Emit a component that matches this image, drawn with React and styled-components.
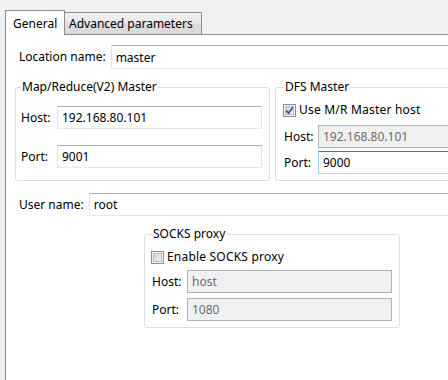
import React from "react";
import styled, { createGlobalStyle, css } from "styled-components";

const Global = createGlobalStyle`
  html, body { margin: 0; padding: 0; overflow: hidden; }
  body { font-family: "Noto Sans", "Open Sans", sans-serif; font-size: 12px; color: #000; }
`;

const Root = styled.div`
  width: 448px;
  height: 380px;
  box-sizing: border-box;
  background: #f0f0f0;
  padding: 10px 0 0 5px;
  display: flex;
  flex-direction: column;
  overflow: hidden;
`;

const TabStrip = styled.div`
  display: flex;
  align-items: flex-end;
  height: 24px;
`;

const Tab = styled.div`
  box-sizing: border-box;
  border: 1px solid #898c95;
  border-bottom: none;
  display: flex;
  align-items: center;
  white-space: nowrap;
  ${(p) =>
    p.$active
      ? css`
          width: 60px;
          height: 25px;
          margin-bottom: -1px;
          background: #fff;
          padding-left: 7px;
          position: relative;
          z-index: 1;
        `
      : css`
          width: 137px;
          height: 22px;
          border-left: none;
          background: linear-gradient(#f2f2f2, #e6e6e6 50%, #d9d9d9 51%, #dcdcdc);
          padding-left: 4px;
        `}
`;

const Panel = styled.div`
  flex: 1;
  width: 470px;
  box-sizing: border-box;
  background: #fff;
  border-left: 1px solid #898c95;
  border-top: 1px solid #898c95;
  padding: 10px 0 0 9px;
  display: flex;
  flex-direction: column;
`;

const FormRow = styled.div`
  display: flex;
  align-items: center;
  gap: ${(p) => p.$gap || 5}px;
  padding-left: 4px;
  margin-top: ${(p) => p.$mt || 0}px;
`;

const Label = styled.span`
  white-space: nowrap;
  line-height: 16px;
`;

const Field = styled.input`
  box-sizing: border-box;
  height: ${(p) => p.$h || 23}px;
  flex: 1;
  min-width: 0;
  margin: 0;
  padding: 0 0 0 4px;
  font: inherit;
  font-size: 12px;
  color: #000;
  background: #fff;
  border: 1px solid;
  border-color: #abadb3 #e2e3ea #e3e9ef #e2e3ea;
  outline: none;
  ${(p) =>
    p.$hover &&
    css`
      border-color: #3d7bad #a4c9e3 #b7d9ed #a4c9e3;
    `}
  &:disabled {
    background: #f0f0f0;
    border-color: #adb2b5;
    color: #6d6d6d;
  }
`;

const GroupsRow = styled.div`
  display: flex;
  gap: 5px;
  margin-top: 10px;
  align-items: stretch;
`;

const Group = styled.fieldset`
  box-sizing: border-box;
  margin: 0;
  min-width: 0;
  border: 1px solid #d5dfe5;
  border-radius: 3px;
  padding: ${(p) => p.$pad};
  width: ${(p) => (p.$width ? `${p.$width}px` : "auto")};
  flex: ${(p) => (p.$width ? "none" : 1)};
  margin-left: ${(p) => p.$ml || 0}px;
  margin-top: ${(p) => p.$mt || 0}px;
  display: flex;
  flex-direction: column;
`;

const Legend = styled.legend`
  padding: 0 1px;
  line-height: 16px;
  white-space: nowrap;
`;

const Grid = styled.div`
  display: grid;
  grid-template-columns: ${(p) => p.$labelWidth}px 1fr;
  column-gap: 4px;
  row-gap: ${(p) => p.$rowGap}px;
  align-items: center;
  margin-top: ${(p) => p.$mt || 0}px;
`;

const CheckRow = styled.label`
  display: flex;
  align-items: center;
  gap: 3px;
  height: 17px;
  line-height: 16px;
  margin-left: -1px;
  white-space: nowrap;
  letter-spacing: 0.2px;
`;

const Box = styled.span`
  box-sizing: border-box;
  width: 13px;
  height: 13px;
  border: 1px solid #8e8f8f;
  background: #f4f4f4;
  padding: 1px;
  display: flex;
  flex: none;
  margin-top: 1px;
`;

const BoxInner = styled.span`
  flex: 1;
  border: 1px solid #b8bcc2;
  background: linear-gradient(135deg, #cbcfd5, #f6f6f6);
  display: flex;
  align-items: center;
  justify-content: center;
  position: relative;
`;

const Check = styled.svg`
  position: absolute;
  left: -1px;
  top: -1px;
  width: 9px;
  height: 9px;
`;

function CheckBox({ checked, children }) {
  return (
    <CheckRow>
      <Box>
        <BoxInner>
          {checked && (
            <Check viewBox="0 0 9 9">
              <path d="M1.2 4.6 L3.6 7.2 L7.8 1.3" fill="none" stroke="#3b54a0" strokeWidth="1.8" />
            </Check>
          )}
        </BoxInner>
      </Box>
      {children}
    </CheckRow>
  );
}

export default function App() {
  return (
    <Root>
      <Global />
      <TabStrip>
        <Tab $active>General</Tab>
        <Tab>Advanced parameters</Tab>
      </TabStrip>
      <Panel>
        <FormRow>
          <Label>Location name:</Label>
          <Field $h={24} defaultValue="master" />
        </FormRow>

        <GroupsRow>
          <Group $width={255} $pad="11px 7px 12px 5px">
            <Legend>Map/Reduce(V2) Master</Legend>
            <Grid $labelWidth={32} $rowGap={16}>
              <Label>Host:</Label>
              <Field defaultValue="192.168.80.101" />
              <Label>Port:</Label>
              <Field defaultValue="9001" />
            </Grid>
          </Group>
          <Group $pad="6px 0 6px 8px">
            <Legend>DFS Master</Legend>
            <CheckBox checked>Use M/R Master host</CheckBox>
            <Grid $labelWidth={30} $rowGap={3} $mt={7}>
              <Label>Host:</Label>
              <Field disabled defaultValue="192.168.80.101" />
              <Label>Port:</Label>
              <Field $hover defaultValue="9000" />
            </Grid>
          </Group>
        </GroupsRow>

        <FormRow $mt={12}>
          <Label>User name:</Label>
          <Field defaultValue="root" />
        </FormRow>

        <Group $width={256} $ml={129} $mt={10} $pad="6px 7px 6px 7px">
          <Legend>SOCKS proxy</Legend>
          <CheckBox>Enable SOCKS proxy</CheckBox>
          <Grid $labelWidth={31} $rowGap={5} $mt={5}>
            <Label>Host:</Label>
            <Field disabled defaultValue="host" />
            <Label>Port:</Label>
            <Field disabled defaultValue="1080" />
          </Grid>
        </Group>
      </Panel>
    </Root>
  );
}
